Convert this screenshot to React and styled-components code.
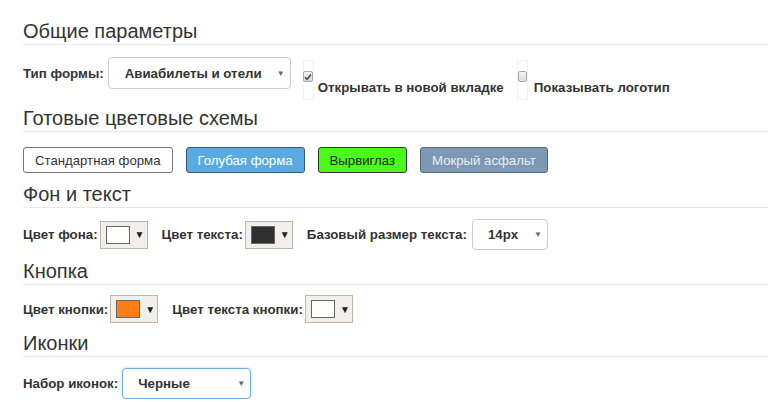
import React from 'react';
import styled, { createGlobalStyle } from 'styled-components';

const GlobalStyle = createGlobalStyle`
  body {
    margin: 0;
    background: #fff;
    font-family: "Liberation Sans", Arial, sans-serif;
    color: #333;
  }
`;

const Page = styled.div`
  padding: 20px 0 0 23px;
  display: flex;
  flex-direction: column;
`;

const Heading = styled.h3`
  margin: ${p => p.top || 0}px 0 ${p => p.below || 11}px;
  font-size: 20px;
  font-weight: normal;
  line-height: 22px;
  padding-bottom: 2px;
  border-bottom: 1px solid #e8e8e8;
  color: #333;
`;

const Row = styled.div`
  display: flex;
  align-items: center;
  height: ${p => p.h}px;
`;

const Label = styled.span`
  font-size: 13.3px;
  font-weight: bold;
  color: #333;
  margin-right: ${p => p.gap ?? 4}px;
  white-space: nowrap;
`;

const Select = styled.div`
  box-sizing: border-box;
  width: ${p => p.w}px;
  height: ${p => p.h || 32}px;
  border: 1px solid ${p => (p.focus ? '#66afe9' : '#ccc')};
  box-shadow: ${p => (p.focus ? '0 0 3px rgba(102,175,233,.5)' : 'none')};
  border-radius: 4px;
  display: flex;
  align-items: center;
  justify-content: space-between;
  padding: 0 5px 0 ${p => p.pl || 16}px;
  font-size: 13.3px;
  font-weight: bold;
  color: #333;
`;

const Caret = styled.span`
  font-size: 8px;
  color: #666;
`;

const CheckLabel = styled.label`
  display: flex;
  align-items: flex-start;
  margin-left: ${p => p.ml || 12}px;
  align-self: flex-start;
  margin-top: 3px;
`;

const CheckWrap = styled.div`
  width: 11px;
  height: 40px;
  border: 1px solid #f2f2f2;
  display: flex;
  justify-content: center;
  padding-top: 10px;
  box-sizing: border-box;
`;

const Box = styled.span`
  width: 11px;
  height: 11px;
  box-sizing: border-box;
  border: 1px solid #aaa;
  border-radius: 2px;
  background: linear-gradient(#f4f4f4, #dcdcdc);
  display: flex;
  align-items: center;
  justify-content: center;
`;

const CheckText = styled.span`
  font-size: 13.3px;
  font-weight: bold;
  color: #333;
  margin: 20px 0 0 ${p => p.ml || 5}px;
  white-space: nowrap;
`;

const Scheme = styled.button`
  box-sizing: border-box;
  height: 26px;
  padding: 0 11px;
  margin-right: 13px;
  border-radius: 3px;
  border: 1px solid ${p => p.border};
  background: ${p => p.bg};
  color: ${p => p.fg};
  font-family: "Liberation Sans", Arial, sans-serif;
  font-size: 13.2px;
`;

const Picker = styled.div`
  box-sizing: border-box;
  width: 48px;
  height: 28px;
  background: #f1efeb;
  border: 1px solid #c3b4a4;
  display: flex;
  align-items: center;
  padding-left: 5px;
  margin-right: 14px;
`;

const Swatch = styled.span`
  box-sizing: border-box;
  width: 24px;
  height: 18px;
  border: 1px solid #666;
  background: ${p => p.color};
`;

const Arrow = styled.span`
  font-size: 10px;
  color: #222;
  margin-left: 5px;
`;

function Check({ checked, children, ml, textMl }) {
  return (
    <CheckLabel ml={ml}>
      <CheckWrap>
        <Box>
          {checked && (
            <svg width="8" height="8" viewBox="0 0 8 8">
              <path d="M1 4.2 L3 6.2 L7 1.5" fill="none" stroke="#444" strokeWidth="1.6" />
            </svg>
          )}
        </Box>
      </CheckWrap>
      <CheckText ml={textMl}>{children}</CheckText>
    </CheckLabel>
  );
}

function ColorPicker({ color }) {
  return (
    <Picker>
      <Swatch color={color} />
      <Arrow>▼</Arrow>
    </Picker>
  );
}

export default function App() {
  return (
    <>
      <GlobalStyle />
      <Page>
        <Heading below={12}>Общие параметры</Heading>
        <Row h={32}>
          <Label>Тип формы:</Label>
          <Select w={183}>
            Авиабилеты и отели <Caret>▼</Caret>
          </Select>
          <Check checked textMl={4}>Открывать в новой вкладке</Check>
          <Check ml={13} textMl={6}>Показывать логотип</Check>
        </Row>

        <Heading top={18} below={15}>Готовые цветовые схемы</Heading>
        <Row h={26}>
          <Scheme bg="#fff" fg="#333" border="#777">Стандартная форма</Scheme>
          <Scheme bg="#5aaae2" fg="#fff" border="#3d5870">Голубая форма</Scheme>
          <Scheme bg="#4cfb1c" fg="#222" border="#333">Вырвиглаз</Scheme>
          <Scheme bg="#7c98b4" fg="#e9eef3" border="#556677">Мокрый асфальт</Scheme>
        </Row>

        <Heading top={10} below={11}>Фон и текст</Heading>
        <Row h={31}>
          <Label gap={2}>Цвет фона:</Label>
          <ColorPicker color="#fff" />
          <Label gap={2}>Цвет текста:</Label>
          <ColorPicker color="#2f2f2f" />
          <Label gap={5}>Базовый размер текста:</Label>
          <Select w={76} h={31} pl={15}>
            14px <Caret>▼</Caret>
          </Select>
        </Row>

        <Heading top={10} below={10}>Кнопка</Heading>
        <Row h={28}>
          <Label gap={2}>Цвет кнопки:</Label>
          <ColorPicker color="#ff7f17" />
          <Label gap={2}>Цвет текста кнопки:</Label>
          <ColorPicker color="#fff" />
        </Row>

        <Heading top={9} below={11}>Иконки</Heading>
        <Row h={31}>
          <Label>Набор иконок:</Label>
          <Select w={129} h={31} focus pl={15}>
            Черные <Caret>▼</Caret>
          </Select>
        </Row>
      </Page>
    </>
  );
}
